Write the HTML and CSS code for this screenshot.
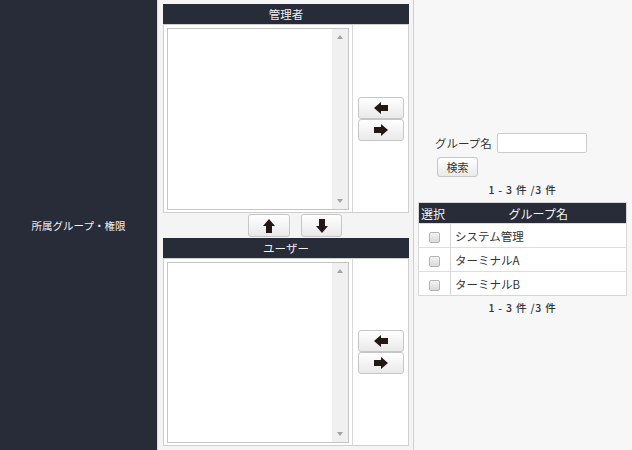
FILE: index.html
```html
<!DOCTYPE html>
<html lang="ja">
<head>
<meta charset="utf-8">
<title>所属グループ・権限</title>
<link rel="stylesheet" href="styles.css">
</head>
<body>
<div class="page">
  <div class="label-col">所属グループ・権限</div>

  <div class="mid-col">
    <div class="sec-head">管理者</div>
    <div class="sec-box">
      <div class="list-cell">
        <div class="listbox">
          <div class="list-area"></div>
          <div class="scroll"><span class="tri up"></span><span class="tri down"></span></div>
        </div>
      </div>
      <div class="btn-cell">
        <button class="btn arrow"><svg viewBox="0 0 14 12" width="14" height="12"><polygon points="0,6 7,0 7,3 14,3 14,9 7,9 7,12" fill="#231815"/></svg></button>
        <button class="btn arrow"><svg viewBox="0 0 14 12" width="14" height="12"><polygon points="14,6 7,0 7,3 0,3 0,9 7,9 7,12" fill="#231815"/></svg></button>
      </div>
    </div>

    <div class="updown">
      <button class="btn ud ud1"><svg viewBox="0 0 12 14" width="12" height="14"><polygon points="6,0 12,7 9,7 9,14 3,14 3,7 0,7" fill="#231815"/></svg></button>
      <button class="btn ud ud2"><svg viewBox="0 0 12 14" width="12" height="14"><polygon points="6,14 12,7 9,7 9,0 3,0 3,7 0,7" fill="#231815"/></svg></button>
    </div>

    <div class="sec-head">ユーザー</div>
    <div class="sec-box sec-box2">
      <div class="list-cell">
        <div class="listbox listbox2">
          <div class="list-area"></div>
          <div class="scroll"><span class="tri up"></span><span class="tri down"></span></div>
        </div>
      </div>
      <div class="btn-cell">
        <button class="btn arrow"><svg viewBox="0 0 14 12" width="14" height="12"><polygon points="0,6 7,0 7,3 14,3 14,9 7,9 7,12" fill="#231815"/></svg></button>
        <button class="btn arrow"><svg viewBox="0 0 14 12" width="14" height="12"><polygon points="14,6 7,0 7,3 0,3 0,9 7,9 7,12" fill="#231815"/></svg></button>
      </div>
    </div>
  </div>

  <div class="right-col">
    <div class="search-row">
      <span class="search-label">グループ名</span>
      <span class="search-input"></span>
    </div>
    <button class="btn search-btn">検索</button>
    <div class="count">1 - 3 件 /3 件</div>
    <table class="grp">
      <thead>
        <tr><th class="c-sel">選択</th><th>グループ名</th></tr>
      </thead>
      <tbody>
        <tr><td class="c-sel"><span class="chk"></span></td><td>システム管理</td></tr>
        <tr><td class="c-sel"><span class="chk"></span></td><td>ターミナルA</td></tr>
        <tr><td class="c-sel"><span class="chk"></span></td><td>ターミナルB</td></tr>
      </tbody>
    </table>
    <div class="count count2">1 - 3 件 /3 件</div>
  </div>
</div>
</body>
</html>
```

FILE: styles.css
```css
* { box-sizing: border-box; }
html, body { margin: 0; padding: 0; }
body {
  width: 632px;
  height: 450px;
  overflow: hidden;
  font-family: "Noto Sans CJK JP", "Noto Sans", "Liberation Sans", sans-serif;
  font-size: 11.5px;
  color: #333;
  background: #f7f7f7;
}
.page {
  display: flex;
  height: 450px;
}
.label-col {
  width: 157px;
  flex: none;
  background: #272c38;
  color: #eef0f3;
  display: flex;
  align-items: center;
  justify-content: center;
  font-size: 10.5px;
  padding-top: 1px;
}
.mid-col {
  width: 257px;
  flex: none;
  background: #f4f4f4;
  border-left: 1px solid #dcdcdc;
  border-right: 1px solid #d0d0d0;
  padding: 4px 4px 4px 5px;
  display: flex;
  flex-direction: column;
}
.sec-head {
  height: 20px;
  background: #272c38;
  color: #f0f0f0;
  text-align: center;
  line-height: 20px;
  font-size: 11.5px;
}
.sec-box {
  display: flex;
  height: 189px;
  border: 1px solid #cfcfcf;
  background: #fff;
}
.sec-box2 { height: 188px; }
.list-cell {
  width: 189px;
  padding: 3px 3px 2px 3px;
  border-right: 1px solid #d8d8d8;
}
.listbox {
  height: 182px;
  border: 1px solid #c4c4c4;
  display: flex;
  background: #fff;
}
.listbox2 { height: 181px; }
.list-area { flex: 1; }
.scroll {
  width: 16px;
  background: #f0f0f0;
  position: relative;
}
.tri {
  position: absolute;
  left: 5px;
  width: 0;
  height: 0;
  border-left: 3.5px solid transparent;
  border-right: 3.5px solid transparent;
}
.tri.up { top: 6px; border-bottom: 4px solid #a3a3a3; }
.tri.down { bottom: 6px; border-top: 4px solid #a3a3a3; }
.btn-cell {
  flex: 1;
  display: flex;
  flex-direction: column;
  align-items: center;
  justify-content: center;
  padding-left: 1px;
}
.btn {
  font-family: inherit;
  margin: 0;
  padding: 0;
  border: 1px solid #c6c6c6;
  border-radius: 3px;
  background: linear-gradient(#ffffff, #e9e9e9);
  display: flex;
  align-items: center;
  justify-content: center;
  color: #333;
}
.arrow {
  width: 46px;
  height: 22px;
}
.updown {
  height: 25px;
  display: flex;
  padding-left: 85px;
  padding-top: 1px;
  gap: 11px;
}
.ud { height: 23px; }
.ud1 { width: 42px; }
.ud2 { width: 41px; }
.right-col {
  flex: 1;
  background: #f7f7f7;
  padding: 133px 5px 0 4px;
}
.search-row {
  display: flex;
  align-items: center;
  height: 20px;
  padding-left: 17px;
}
.search-label {
  width: 62px;
  font-size: 11.5px;
  color: #333;
}
.search-input {
  width: 90px;
  height: 20px;
  border: 1px solid #cccccc;
  border-radius: 2px;
  background: #fff;
}
.search-btn {
  margin: 4px 0 0 19px;
  width: 41px;
  height: 20px;
  font-size: 11px;
  border-radius: 3px;
}
.count {
  text-align: center;
  font-size: 10.5px;
  color: #333;
  height: 25px;
  line-height: 25px;
  font-weight: 500;
  letter-spacing: 0.8px;
}
.count2 { height: 24px; line-height: 24px; }
.grp {
  width: 209px;
  border-collapse: collapse;
  background: #fff;
  border: 1px solid #d6d6d6;
}
.grp th {
  height: 21px;
  background: #272c38;
  color: #f2f2f2;
  font-weight: normal;
  font-size: 12px;
  padding: 0;
}
.grp th.c-sel { width: 32px; text-align: left; padding-left: 2px; }
.grp td {
  height: 24px;
  border-top: 1px solid #dddddd;
  padding: 0 0 0 4px;
  font-size: 11.5px;
  color: #333;
}
.grp td.c-sel {
  border-right: 1px solid #d6d6d6;
  padding: 0;
  text-align: center;
}
.chk {
  display: inline-block;
  width: 11px;
  height: 11px;
  border: 1px solid #b3b3b3;
  border-radius: 2px;
  background: linear-gradient(#f4f4f4, #d9d9d9);
  vertical-align: middle;
}
```
